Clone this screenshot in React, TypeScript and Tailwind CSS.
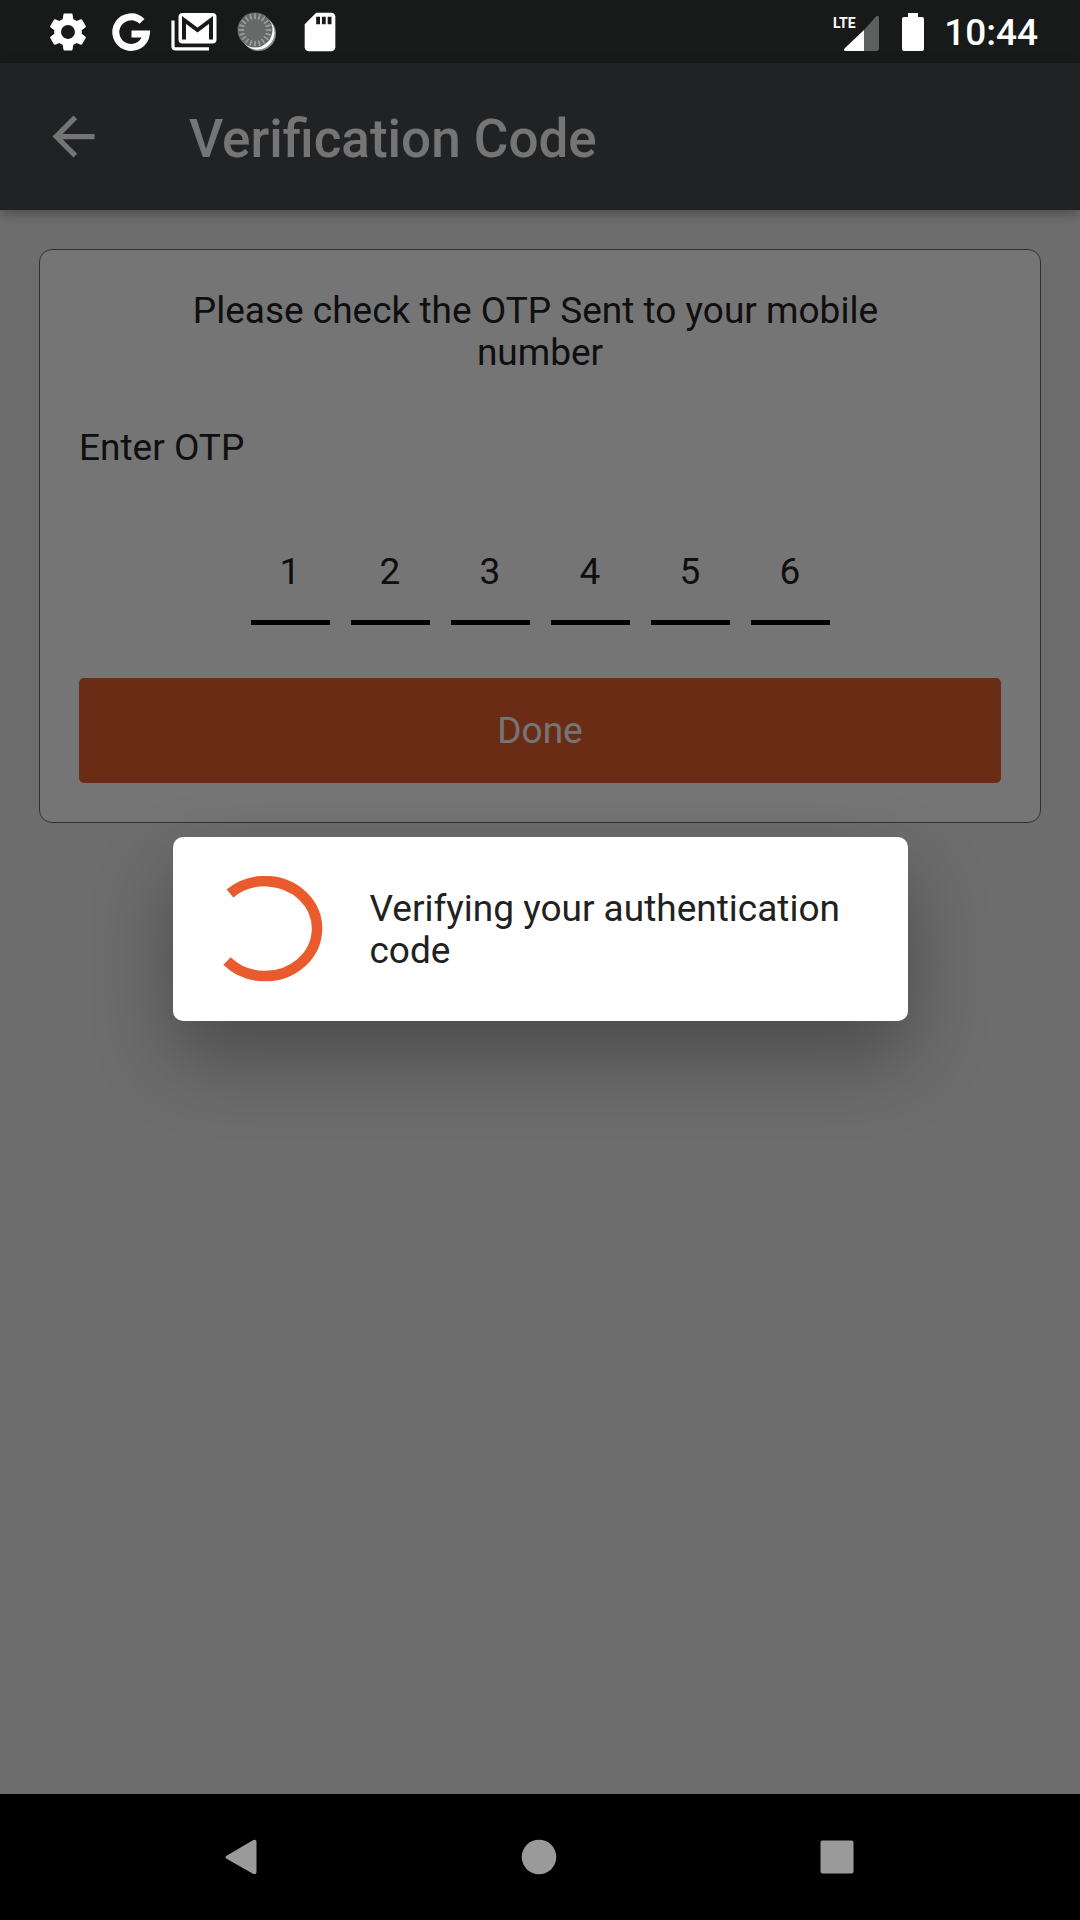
import React from "react";
import { MdArrowBack, MdSdCard, MdSettings } from "react-icons/md";

const digits = ["1", "2", "3", "4", "5", "6"];

function GoogleIcon() {
  return (
    <svg viewBox="0 0 46 46" className="size-[46px]" aria-hidden="true">
      <path
        d="M34 12.4A15.300 15.300 0 1 0 38.300 25H23.500"
        fill="none"
        stroke="white"
        strokeWidth="7"
      />
    </svg>
  );
}

function MailStackIcon() {
  return (
    <svg viewBox="0 0 46 46" className="size-[46px]" aria-hidden="true">
      <path d="M2 11.500V37.500Q2 39.800 4.500 39.800H38" fill="none" stroke="white" strokeWidth="3.200" />
      <rect x="7.500" y="4" width="38" height="30.500" rx="4" fill="white" />
      <path d="M13 30.500V11L26.500 21L40 11V30.500" fill="none" stroke="#181a19" strokeWidth="4" />
    </svg>
  );
}

function SyncIcon() {
  const ticks = Array.from({ length: 20 }, (_, i) => i * 18);
  return (
    <svg viewBox="0 0 46 46" className="size-[46px]" aria-hidden="true">
      <circle cx="24.500" cy="24.500" r="17.500" fill="#8b8d8c" />
      <circle cx="23.500" cy="23.500" r="17" fill="white" />
      <circle cx="21" cy="21" r="17.500" fill="#666968" />
      {ticks.map((a) => (
        <path key={a} d="M21 4.500V10" stroke="#a0a2a1" strokeWidth="1.600" transform={`rotate(${a} 21 21)`} />
      ))}
    </svg>
  );
}

function StatusBar() {
  return (
    <header className="flex h-[63px] items-center justify-between bg-[#181a19] pr-[42px] pl-[45px] text-white">
      <div className="flex items-center gap-[17px]">
        <MdSettings className="size-[46px]" />
        <GoogleIcon />
        <MailStackIcon />
        <SyncIcon />
        <MdSdCard className="size-[46px]" />
      </div>
      <div className="flex items-center">
        <svg viewBox="0 0 47 38" className="mr-[22px] h-[38px] w-[47px]" aria-label="LTE signal">
          <path d="M46 5.500V35a3 3 0 0 1-3 3H31V17L42.500 4Q46 1 46 5.500z" fill="#5e605f" />
          <path d="M31 17V38H13Q9.500 38 12 35z" fill="white" />
          <text x="0" y="15" fontFamily="Liberation Sans Narrow, Roboto" fontSize="14" fontWeight="700" fill="white">
            LTE
          </text>
        </svg>
        <svg viewBox="0 0 22 38" className="mr-5 h-[38px] w-[22px]" aria-label="Battery full">
          <path d="M6 0H16V4H20a2 2 0 0 1 2 2V36a2 2 0 0 1-2 2H2a2 2 0 0 1-2-2V6a2 2 0 0 1 2-2H6z" fill="white" />
        </svg>
        <time className="pt-[2px] text-[37px] leading-none font-medium">10:44</time>
      </div>
    </header>
  );
}

function Spinner() {
  return (
    <svg viewBox="0 0 116 106" className="h-[106px] w-[116px] shrink-0" role="progressbar" aria-label="Verifying">
      <path d="M22 17.500A52 47.500 0 1 1 19 85" fill="none" stroke="#e95b2d" strokeWidth="10.500" />
    </svg>
  );
}

export default function App() {
  return (
    <div className="flex min-h-screen flex-col bg-black font-['Roboto',sans-serif] text-[37px] leading-[42px] text-[#212121]">
      <StatusBar />
      <div className="relative flex flex-1 flex-col bg-[#eeeeee]">
        <div className="flex h-[147px] items-center bg-[#484a4e] pl-[42px] text-white shadow-[0_4px_12px_rgba(0,0,0,0.3)]">
          <button aria-label="Back" className="mr-[84px]">
            <MdArrowBack className="size-[63px]" />
          </button>
          <h1 className="pt-1 text-[53px] leading-[62px] font-medium">Verification Code</h1>
        </div>

        <main className="px-[39px] pt-[39px]">
          <form
            className="flex flex-col rounded-[13px] border border-[#6b6b6b] bg-white px-[39px] pb-[39px]"
            onSubmit={(e) => e.preventDefault()}
          >
            <p className="mt-10 px-5 text-center">
              Please check the OTP Sent to your mobile&nbsp;
              <br />
              number
            </p>
            <label htmlFor="otp-0" className="mt-[53px]">
              Enter OTP
            </label>
            <div className="mt-[53px] flex justify-center gap-[21px]">
              {digits.map((d, i) => (
                <input
                  key={d}
                  id={`otp-${i}`}
                  aria-label={`OTP digit ${d}`}
                  inputMode="numeric"
                  maxLength={1}
                  defaultValue={d}
                  className="h-[103px] w-[79px] border-b-[5px] border-black bg-transparent text-center"
                />
              ))}
            </div>
            <button className="mt-[53px] h-[105px] rounded-[5px] bg-[#e96030] text-white">Done</button>
          </form>
        </main>

        <div className="absolute inset-0 flex items-center justify-center bg-black/54 px-[105px]">
          <div
            role="dialog"
            aria-modal="true"
            className="flex w-[735px] items-center rounded-[10px] bg-white px-[35px] py-[39px] shadow-[0_36px_80px_rgba(0,0,0,0.32)]"
          >
            <Spinner />
            <p className="ml-[46px] pt-[2px] pr-[30px]">Verifying your authentication code</p>
          </div>
        </div>
      </div>

      <nav className="flex h-[126px] items-center justify-around pr-[94px] pl-[92px]">
        <button aria-label="Back">
          <svg viewBox="0 0 36 36" className="size-9">
            <path d="M4 16.500L29.500 1.500Q33.500 -0.500 33.500 3V33Q33.500 36.500 29.500 34.500L4 20Q1 18 4 16.500z" fill="#9a9a9a" />
          </svg>
        </button>
        <button aria-label="Home">
          <svg viewBox="0 0 36 36" className="size-9">
            <circle cx="18" cy="18" r="17.300" fill="#9a9a9a" />
          </svg>
        </button>
        <button aria-label="Recent apps">
          <svg viewBox="0 0 36 36" className="size-9">
            <rect x="1.500" y="1.500" width="33" height="33" rx="2" fill="#9a9a9a" />
          </svg>
        </button>
      </nav>
    </div>
  );
}
